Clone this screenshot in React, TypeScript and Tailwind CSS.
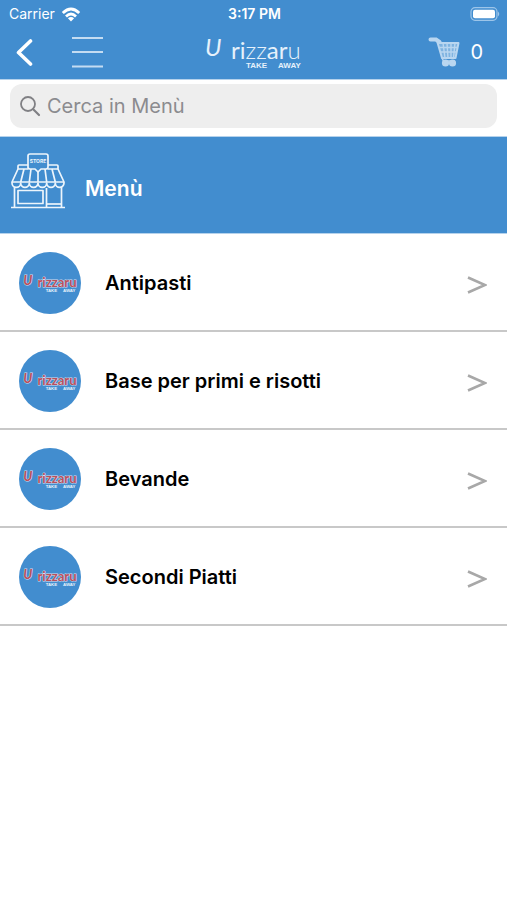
import React, { useState } from 'react';

interface LogoProps {
  className?: string;
  variant?: 'plain' | 'red';
}

const categories = ['Antipasti', 'Base per primi e risotti', 'Bevande', 'Secondi Piatti'];

const Logo: React.FC<LogoProps> = ({ className = '', variant = 'plain' }) => {
  const isRed = variant === 'red';
  const nameClasses = isRed ? 'fill-[#b8505c] stroke-[#d5dcee]' : 'fill-[#e6f1fb] stroke-none';

  return (
    <svg viewBox="0 0 104 44" className={className} role="img" aria-label="U rizzaru take away">
      <g className={nameClasses} strokeWidth="2" paintOrder="stroke" fontFamily="Lato, sans-serif">
        <text x="3" y="26" fontSize="24" fontStyle="italic" fontWeight={isRed ? 700 : 400}>U</text>
        <text x="29" y="29" fontSize="24" fontWeight={isRed ? 700 : 400}>
          ri
          <tspan fontWeight={isRed ? 700 : 300}>zz</tspan>
          ar
          <tspan fontWeight={isRed ? 700 : 300}>u</tspan>
        </text>
      </g>
      <g fill="#e6f1fb" fontFamily="Liberation Sans, sans-serif" fontSize="8" fontWeight="700">
        <text x="44" y="38">TAKE</text>
        <text x="76" y="38">AWAY</text>
      </g>
    </svg>
  );
};

const StatusBar: React.FC = () => (
  <div className="grid h-7 grid-cols-3 items-center pl-[9px] pr-[7px] text-sm text-white">
    <div className="flex items-center gap-1.5">
      <span>Carrier</span>
      <svg viewBox="0 0 20 15" className="h-[15px] w-5" fill="none" stroke="white" strokeWidth="2.8" aria-hidden="true">
        <path d="M1.8 6 Q10 -2 18.2 6" />
        <path d="M5 9.4 Q10 4.6 15 9.4" />
        <path d="M10 14.4 L6.9 11.3 Q10 8.6 13.1 11.3 Z" fill="white" stroke="none" />
      </svg>
    </div>
    <span className="text-center font-semibold">3:17 PM</span>
    <svg viewBox="0 0 30 14" className="h-3.5 w-[30px] justify-self-end" aria-hidden="true">
      <rect x="1" y="0.7" width="26" height="12.6" rx="4" fill="none" stroke="#9dc5e9" strokeWidth="1.2" />
      <rect x="3" y="2.7" width="22" height="8.6" rx="2" fill="white" />
      <path d="M28 4.5 Q30.5 7 28 9.5 Z" fill="#9dc5e9" />
    </svg>
  </div>
);

const CartIcon: React.FC = () => (
  <svg viewBox="0 0 32 30" className="h-[30px] w-8" fill="none" stroke="#b9d6f0" aria-hidden="true">
    <path d="M2.5 2.5 H8 L11.5 5" strokeWidth="4" strokeLinecap="round" />
    <path d="M9.5 5.5 L14 21 H27.5 L30.5 6 H10 Z" fill="#7fb3e0" strokeWidth="2" strokeLinejoin="round" />
    <path d="M11 10.5 H29.5 M12 15 H28.6 M15 6 L17 21 M19 6 L20 21 M23 6 V21 M27 6 L25.5 21" strokeWidth="1.4" />
    <path d="M14 21 L15.5 24 H27" strokeWidth="1.6" />
    <circle cx="17.5" cy="26" r="3.6" fill="#b9d6f0" stroke="none" />
    <circle cx="24.5" cy="26" r="3.6" fill="#b9d6f0" stroke="none" />
  </svg>
);

const StoreIcon: React.FC = () => (
  <svg viewBox="0 0 54 56" className="h-14 w-[54px] shrink-0" fill="none" stroke="#edf5fc" strokeWidth="1.7" strokeLinejoin="round" aria-hidden="true">
    <path d="M17 15 V3 Q17 1 19 1 H35 Q37 1 37 3 V14 Q37 16 35 16 H30 L27 19 L24 16 H19 Q17 16 17 14" />
    <path d="M17 12 H8 Q7 12 7 13 V16 H17 M37 12 H46 Q47 12 47 13 V16 H37" />
    <path d="M7 16 L1 29 V30 A4.3 4.3 0 0 0 9.7 30 A4.3 4.3 0 0 0 18.3 30 A4.3 4.3 0 0 0 27 30 A4.3 4.3 0 0 0 35.7 30 A4.3 4.3 0 0 0 44.3 30 A4.3 4.3 0 0 0 53 30 V29 L47 16" />
    <path d="M1 29 H53 M13 16 L9.7 29 M20 16 L18.3 29 M27 19 V29 M34 16 L35.7 29 M41 16 L44.3 29" />
    <path d="M3.5 34 V54 M50.5 34 V54 M0 54.5 H54 M35.5 35 V54" />
    <rect x="7" y="37.5" width="25" height="13" />
    <path d="M36 51 H50" />
    <text x="27" y="10" textAnchor="middle" fontSize="5" fontWeight="700" fontFamily="Inter, sans-serif" fill="#edf5fc" stroke="none">STORE</text>
  </svg>
);

export default function App() {
  const [query, setQuery] = useState('');

  return (
    <div className="min-h-screen bg-white font-['Inter',sans-serif]">
      <header className="border-b border-[#b5d2ec] bg-[#428dcf]">
        <StatusBar />
        <div className="grid h-[51px] grid-cols-[1fr_auto_1fr] items-start pl-4 pr-6">
          <div className="flex items-center gap-[38px] pt-2">
            <button aria-label="Indietro" className="h-8">
              <svg viewBox="0 0 18 32" className="h-8 w-[18px]" fill="none" stroke="white" strokeWidth="3.6" strokeLinecap="round" strokeLinejoin="round">
                <path d="M14.5 5 L2.5 16.5 L14.5 28" />
              </svg>
            </button>
            <button aria-label="Apri menu" className="h-8">
              <svg viewBox="0 0 32 32" className="h-8 w-8" stroke="#c4dcf2" strokeWidth="2">
                <path d="M0 2 H31 M0 16 H31 M0 30.5 H31" />
              </svg>
            </button>
          </div>
          <Logo className="ml-2 mt-0.5 h-11 w-[104px]" />
          <button aria-label="Carrello, 0 articoli" className="flex items-center gap-2.5 justify-self-end pt-[9px] text-xl text-white">
            <CartIcon />
            <span>0</span>
          </button>
        </div>
      </header>

      <main>
        <div className="px-[10px] pb-2 pt-1">
          <label className="flex h-11 items-center gap-1.5 rounded-xl bg-[#eeeeee] px-[9px]">
            <svg viewBox="0 0 22 22" className="h-[22px] w-[22px] shrink-0" fill="none" stroke="#808084" strokeWidth="1.8" strokeLinecap="round" aria-hidden="true">
              <circle cx="9" cy="9" r="7" />
              <path d="M14.2 14.2 L20 20" strokeWidth="2.2" />
            </svg>
            <input
              type="search"
              aria-label="Cerca in Menù"
              placeholder="Cerca in Menù"
              value={query}
              onChange={(e) => setQuery(e.target.value)}
              className="min-w-0 flex-1 bg-transparent text-xl text-black outline-none placeholder:text-[#8b8b8f]"
            />
          </label>
        </div>

        <div className="flex h-[98px] items-start gap-5 border-y border-[#b5d2ec] bg-[#428dcf] px-[11px] pt-4">
          <StoreIcon />
          <h1 className="pt-5 text-[21px] font-semibold leading-8 text-white">Menù</h1>
        </div>

        <ul>
          {categories.map((name) => (
            <li key={name} className="border-b-2 border-[#c8c8c8]">
              <a href="#" className="flex h-24 items-center pl-[19px] pr-5 pt-0.5">
                <span className="flex size-[62px] shrink-0 items-center justify-center rounded-full bg-[#428dcf]">
                  <Logo variant="red" className="h-6 w-[58px]" />
                </span>
                <span className="ml-6 flex-1 text-xl font-semibold text-black">{name}</span>
                <svg viewBox="0 0 20 20" className="mt-1 size-5" fill="none" stroke="#a8a8a8" strokeWidth="2.6" aria-hidden="true">
                  <path d="M1 2.5 L18 10 L1 17.5" />
                </svg>
              </a>
            </li>
          ))}
        </ul>
      </main>
    </div>
  );
}
